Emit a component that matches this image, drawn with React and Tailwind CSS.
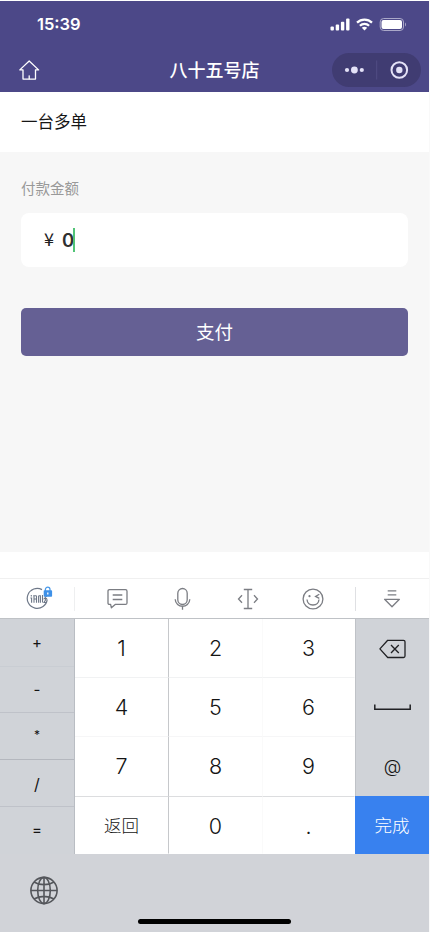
import { useState } from 'react'

const operators = [
  { key: '+', cell: 'h-12 pt-0.5 text-[15px] border-[#c9cdd3]' },
  { key: '-', cell: 'h-[46px] pt-0.5 text-[15px] border-[#bfc2c9]' },
  { key: '*', cell: 'h-[47px] pb-0.5 text-[12px] border-[#b4b7be]' },
  { key: '/', cell: 'h-[47px] pt-0.5 text-[16px] border-[#bfc2c9]' },
  { key: '=', cell: 'h-[47px] pt-0 text-[15px] border-transparent' }
]

const rows = [
  { keys: ['1', '2', '3'], height: 'h-[59px]', cell: 'pt-px border-b-[#f1f2f3]' },
  { keys: ['4', '5', '6'], height: 'h-[59px]', cell: 'pt-px border-b-[#f6f6f7]' },
  { keys: ['7', '8', '9'], height: 'h-[60px]', cell: 'border-b-[#dcdddf]' },
  { keys: ['返回', '0', '.'], height: 'h-[57px]', cell: 'pt-0.5 border-b-transparent' }
]

const columns = ['border-r-[#c6c8cb]', 'border-r-[#fafafa]', 'border-r-transparent']

function App() {
  const [amount, setAmount] = useState('0')

  const press = key => {
    if (key === '返回') return
    setAmount(prev => (prev === '0' && key !== '.' ? key : prev + key))
  }

  return (
    <div className="w-[430px] h-[932px] bg-[#f9f9f9] overflow-hidden font-['Inter','Noto_Sans_CJK_SC',sans-serif]">
      <div className="w-[429px] h-[932px] bg-white flex flex-col pt-px">
        <Header />

        <div className="h-[60px] shrink-0 flex items-center pt-px pl-[21px] text-[16.5px] text-[#161616]">
          一台多单
        </div>

        {/* Payment form */}
        <main className="h-[400px] shrink-0 bg-[#f7f7f7] px-[21px] pt-[26px]">
          <div className="h-[22px] leading-[22px] text-[14.5px] text-[#999]">付款金额</div>
          <div className="mt-[13px] h-[54px] rounded-lg bg-white flex items-center pl-[23px]">
            <span className="w-[18px] text-[18px] leading-5 font-['Noto_Sans_CJK_SC',sans-serif] text-[#222] pb-1">¥</span>
            <span className="text-[18.5px] leading-6 font-semibold text-[#303030]">{amount}</span>
            <span className="w-0.5 h-6 -ml-px bg-[#52c477]"></span>
          </div>
          <button className="mt-[41px] w-full h-12 rounded-[5px] bg-[#656094] text-[18.5px] text-white flex items-center justify-center pt-px">
            支付
          </button>
        </main>

        <div className="h-[26px] shrink-0"></div>

        <Toolbar />
        <Keypad onPress={press} onDelete={() => setAmount(prev => prev.slice(0, -1) || '0')} />

        {/* Home indicator area */}
        <footer className="h-[78px] shrink-0 bg-[#d1d3d8] flex flex-col justify-between pt-[22px] pb-[8px]">
          <Globe />
          <div className="w-[153px] h-[5px] rounded-full bg-black ml-[138px]"></div>
        </footer>
      </div>
    </div>
  )
}

function Header() {
  return (
    <header className="h-[91px] shrink-0 bg-[#4c4888] text-white">
      <div className="h-[46px] flex items-center justify-between pl-[37px] pr-[22px]">
        <span className="text-[16.5px] font-semibold pt-px">15:39</span>
        <div className="flex items-center gap-[6px]">
          <svg width="20" height="13" viewBox="0 0 20 13" fill="white">
            <rect x="0.5" y="8.5" width="3.4" height="4" rx="1" />
            <rect x="5.7" y="6.5" width="3.4" height="6" rx="1" />
            <rect x="10.9" y="3.7" width="3.4" height="8.8" rx="1" />
            <rect x="16.1" y="0.6" width="3.4" height="11.9" rx="1" />
          </svg>
          <svg width="17" height="13" viewBox="0 0 17 13" fill="none" stroke="white" strokeWidth="2.2">
            <path d="M1 4.6C5.2.5 11.8.5 16 4.6" />
            <path d="M3.9 7.7C6.5 5.2 10.5 5.2 13.1 7.7" />
            <path d="M8.5 12.5L5.8 9.8C7.4 8.4 9.6 8.4 11.2 9.8Z" fill="white" stroke="none" />
          </svg>
          <svg width="28" height="13" viewBox="0 0 28 13" fill="none">
            <rect x="1.2" y="0.5" width="23.3" height="12" rx="3.5" stroke="#aaa8c8" />
            <rect x="2.5" y="2" width="20.5" height="9" rx="2" fill="white" />
            <path d="M26 4.5V8.5C27.3 8 27.3 5 26 4.5Z" fill="#aaa8c8" />
          </svg>
        </div>
      </div>

      <div className="h-[45px] grid grid-cols-[1fr_auto_1fr] items-center pl-[19px] pr-2">
        <svg width="21" height="20" viewBox="0 0 21 20" fill="none" stroke="white" strokeWidth="1.3" strokeLinejoin="round" strokeLinecap="round">
          <path d="M10.2 1L.8 9.9H4V19.1H16.5V9.9H19.6Z" />
          <path d="M10.2 15.8V18.8" />
        </svg>
        <h1 className="text-[18px] leading-6 font-medium pt-0.5 pr-[11px]">八十五号店</h1>
        <div className="justify-self-end w-[89px] h-[34px] rounded-full bg-[#403c72] flex items-center">
          <svg width="89" height="34" viewBox="0 0 89 34" fill="#e4e2f7">
            <circle cx="15" cy="17" r="2.1" />
            <circle cx="22.4" cy="17" r="3.4" />
            <circle cx="29.8" cy="17" r="2.1" />
            <path d="M44.7 7.5V26.5" stroke="#514d84" />
            <circle cx="67.3" cy="17" r="7.8" fill="none" stroke="#e4e2f7" strokeWidth="2" />
            <circle cx="67.3" cy="17" r="3.2" />
          </svg>
        </div>
      </div>
    </header>
  )
}

function Toolbar() {
  return (
    <div className="h-10 shrink-0 border-t border-[#f0f0f0] grid grid-cols-[75px_84px_47px_84px_65px_74px] items-center text-[#7b7d83]">
      <div className="h-6 border-r border-[#eeeff0] flex items-center pl-[26px]">
        <svg width="28" height="26" viewBox="0 0 28 26" fill="none" stroke="#6e7888" strokeWidth="1.2">
          <path d="M16 3.6A10 10 0 1 0 21.2 13.4" />
          <g strokeWidth="1.1">
            <path d="M5.3 9V10.4M4.4 12H5.6V16.8M8 9.8V16.8M7.2 9.8H10.5M10.5 9.8V16.8M8 13H10.3M12.6 9.8V16.8M12.6 9.8H14.4V16.8M16.5 9V16.5M18 9.8H20.8L18.3 12.6H20.4L18 16.5H21" />
          </g>
          <path d="M19.4 5V3.5A2.3 2.3 0 0 1 24 3.5V5" stroke="#4b9ae9" strokeWidth="1.3" />
          <rect x="17.7" y="4.2" width="8.4" height="6.6" rx="0.8" fill="#3e91e8" stroke="none" />
          <path d="M21.8 6.4V8.6" stroke="white" strokeWidth="1.3" />
        </svg>
      </div>

      <svg className="justify-self-center" width="21" height="21" viewBox="0 0 21 21" fill="none" stroke="currentColor" strokeWidth="1.3" strokeLinejoin="round">
        <path d="M2.5 1.7H18.5Q20 1.7 20 3.2V14.9Q20 16.4 18.5 16.4H8.2L4.4 19.8L3.6 16.4H2.5Q1 16.4 1 14.9V3.2Q1 1.7 2.5 1.7Z" />
        <path d="M5.7 7H15.3M5.7 11.5H15.3" />
      </svg>

      <svg className="justify-self-center" width="17" height="24" viewBox="0 0 17 24" fill="none" stroke="currentColor" strokeWidth="1.3">
        <rect x="3.8" y="1.5" width="9.4" height="16" rx="4.7" />
        <path d="M1.2 12.2C1.6 21.6 15.4 21.6 15.8 12.2M8.5 19.5V22.7" />
      </svg>

      <svg className="justify-self-center" width="22" height="22" viewBox="0 0 22 22" fill="none" stroke="currentColor" strokeWidth="1.3">
        <path d="M6.8 1.5H15.2M11 1.5V20.5M6.8 20.5H15.2" />
        <path d="M5 7.2L1.5 11L5 14.8M17 7.2L20.5 11L17 14.8" />
      </svg>

      <div className="h-6 w-[66px] border-r border-[#dfe0e3] flex items-center pl-[12px]">
        <svg width="22" height="22" viewBox="0 0 22 22" fill="none" stroke="currentColor" strokeWidth="1.3">
          <circle cx="11" cy="11" r="9.9" />
          <path d="M5 11.5C5.7 18.8 16.3 18.8 17 11.5" />
          <path d="M17.3 6.3L13.6 8.4L17.3 10.3" />
          <circle cx="7.5" cy="8.2" r="1.1" fill="currentColor" stroke="none" />
        </svg>
      </div>

      <svg className="justify-self-center" width="18" height="20" viewBox="0 0 18 20" fill="none" stroke="currentColor" strokeWidth="1.3" strokeLinejoin="round">
        <path d="M4.7 1.8H13.3M4.7 5.8H13.3" />
        <path d="M1.6 10.3H16.4L9 17.8Z" />
      </svg>
    </div>
  )
}

function Keypad({ onPress, onDelete }) {
  return (
    <div className="h-[236px] shrink-0 border-t border-[#bfc2c6] grid grid-cols-[75px_280px_74px] text-[#141414]">
      {/* Operators */}
      <div className="bg-[#d0d3d8] border-r border-[#b9bdc3]">
        {operators.map(op => (
          <button
            key={op.key}
            onClick={() => onPress(op.key)}
            className={`w-full border-b flex items-center justify-center ${op.cell}`}
          >
            {op.key}
          </button>
        ))}
      </div>

      {/* Numbers */}
      <div className="bg-white">
        {rows.map(row => (
          <div key={row.keys[0]} className={`grid grid-cols-[94px_94px_92px] ${row.height}`}>
            {row.keys.map((key, i) => (
              <button
                key={key}
                onClick={() => onPress(key)}
                className={`flex items-center justify-center border-r border-b font-light ${columns[i]} ${row.cell} ${
                  key === '返回' ? 'text-[17.5px]' : 'text-[21.5px]'
                }`}
              >
                {key}
              </button>
            ))}
          </div>
        ))}
      </div>

      {/* Actions */}
      <div className="bg-[#d0d3d8] flex flex-col">
        <button onClick={onDelete} className="h-[59px] flex items-center justify-center border-l border-[#bfc2c7]">
          <svg width="27" height="20" viewBox="0 0 27 20" fill="none" stroke="#202124" strokeWidth="1.3" strokeLinejoin="round">
            <path d="M8.7 1.3H24.5Q26 1.3 26 2.8V17Q26 18.5 24.5 18.5H8.7L.9 9.9Z" />
            <path d="M12 6L19.8 14M19.8 6L12 14" />
          </svg>
        </button>
        <button onClick={() => onPress(' ')} className="h-[59px] flex items-center justify-center border-l border-[#bfc2c7]">
          <svg width="37" height="7" viewBox="0 0 37 7" fill="none" stroke="#202124" strokeWidth="1.5">
            <path d="M.8 .5V5.3H36.2V.5" />
          </svg>
        </button>
        <button onClick={() => onPress('@')} className="h-[59px] flex items-center justify-center border-l border-[#bfc2c7] text-[18px] font-light">
          @
        </button>
        <button className="h-[58px] bg-[#3881ef] text-white text-[17.5px] font-light flex items-center justify-center pt-0.5">
          完成
        </button>
      </div>
    </div>
  )
}

function Globe() {
  return (
    <svg className="ml-[29px]" width="30" height="30" viewBox="0 0 30 30" fill="none" stroke="#54565b" strokeWidth="1.6">
      <circle cx="15" cy="14.5" r="13.1" />
      <ellipse cx="15" cy="14.5" rx="6.3" ry="13.1" />
      <path d="M15 1.4V27.6M1.9 14.5H28.1M5 6C10.5 9.5 19.5 9.5 25 6M5 23C10.5 19.5 19.5 19.5 25 23" />
    </svg>
  )
}

export default App
